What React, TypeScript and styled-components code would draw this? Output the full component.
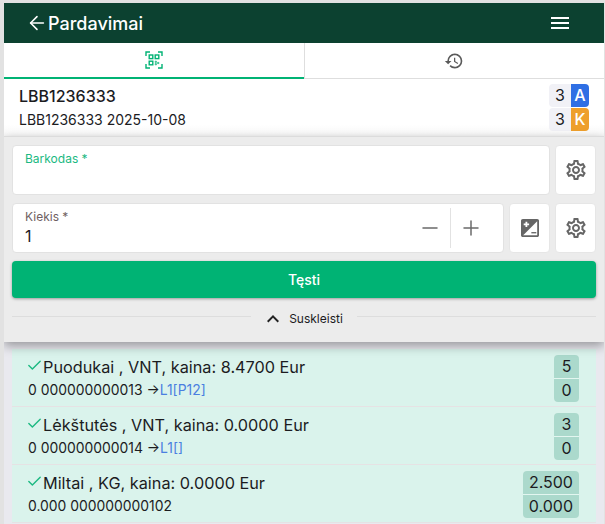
import React from 'react';
import styled, { createGlobalStyle } from 'styled-components';
import { ArrowLeft, Check, Minus, Plus } from 'lucide-react';
import { MdExpandLess, MdHistory, MdOutlineSettings } from 'react-icons/md';

const GlobalStyle = createGlobalStyle`
  html, body {
    margin: 0;
    padding: 0;
    height: 524px;
    overflow: hidden;
    background: #e2e2e2;
    font-family: Inter, "Liberation Sans", sans-serif;
    color: #1c1c1f;
  }
  * {
    box-sizing: border-box;
  }
`;

const Page = styled.div`
  width: 600px;
  height: 521px;
  margin: 3px 0 0 4px;
  background: #e9e9ef;
  overflow: hidden;
`;

const Header = styled.header`
  height: 40px;
  display: flex;
  align-items: center;
  justify-content: space-between;
  padding: 0 35px 0 22px;
  background: #0c4130;
  color: #fff;
`;

const HeaderTitle = styled.div`
  display: flex;
  align-items: center;
  gap: 0;
  font-size: 18px;
  font-weight: 500;
`;

const Tabs = styled.nav`
  height: 36px;
  display: flex;
  background: #fff;
`;

const Tab = styled.div<{ $active?: boolean }>`
  flex: 1;
  display: flex;
  align-items: center;
  justify-content: center;
  color: ${({ $active }) => ($active ? '#00b374' : '#5a5a5a')};
  border-bottom: ${({ $active }) => ($active ? '2px solid #00b374' : '1px solid #dedede')};
  border-left: ${({ $active }) => ($active ? 'none' : '1px solid #dedede')};
`;

const Summary = styled.section`
  height: 57px;
  display: flex;
  justify-content: space-between;
  padding: 5px 15px;
  background: linear-gradient(#fff 80%, #f8f8f8);
`;

const SummaryText = styled.div`
  display: flex;
  flex-direction: column;
  padding-top: 2px;
`;

const SummaryTitle = styled.div`
  font-size: 16px;
  font-weight: 500;
  line-height: 20px;
`;

const SummarySub = styled.div`
  font-size: 14px;
  line-height: 20px;
  margin-top: 4px;
`;

const Badges = styled.div`
  display: flex;
  flex-direction: column;
  gap: 1px;
`;

const BadgeRow = styled.div`
  display: flex;
  height: 23px;
  width: 40px;
  font-size: 16px;
  line-height: 23px;
  text-align: center;
`;

const BadgeCount = styled.span`
  flex: 1;
  background: #f1f1f6;
  border-radius: 4px 0 0 4px;
`;

const BadgeLetter = styled.span<{ $color: string }>`
  width: 18px;
  color: #fff;
  font-weight: 500;
  background: ${({ $color }) => $color};
  border-radius: 0 4px 4px 0;
`;

const Panel = styled.section`
  position: relative;
  z-index: 1;
  height: 206px;
  display: flex;
  flex-direction: column;
  padding: 8px 8px 0;
  background: #ececec;
  border-top: 1px solid #dcdcdc;
  box-shadow: 0 4px 10px rgba(0, 0, 0, 0.35);
`;

const FieldRow = styled.div`
  display: flex;
  gap: 5px;
  height: 50px;
  margin-bottom: 8px;
`;

const Field = styled.div`
  flex: 1;
  display: flex;
  align-items: stretch;
  background: #fff;
  border: 1px solid #e2e2e2;
  border-radius: 4px;
`;

const FieldBody = styled.div`
  flex: 1;
  padding: 6px 12px;
`;

const FieldLabel = styled.div<{ $focused?: boolean }>`
  font-size: 12px;
  line-height: 14px;
  color: ${({ $focused }) => ($focused ? '#1cb982' : '#6f5f62')};
`;

const FieldValue = styled.div`
  font-size: 16px;
  line-height: 20px;
  margin-top: 2px;
`;

const Stepper = styled.div`
  display: flex;
  align-items: center;
  padding-right: 12px;
  color: #6a6a6a;
`;

const StepButton = styled.div`
  width: 40px;
  height: 40px;
  display: flex;
  align-items: center;
  justify-content: center;
`;

const StepDivider = styled.div`
  width: 1px;
  height: 40px;
  background: #e2e2e2;
`;

const IconButton = styled.div`
  width: 41px;
  display: flex;
  align-items: center;
  justify-content: center;
  color: #666;
  background: #fff;
  border: 1px solid #e6e6e6;
  border-radius: 4px;
`;

const SubmitButton = styled.button`
  height: 37px;
  margin: 0;
  border: none;
  border-radius: 4px;
  background: #00b374;
  color: #fff;
  font-family: inherit;
  font-size: 14px;
  font-weight: 500;
  box-shadow: 0 1px 3px rgba(0, 0, 0, 0.35);
`;

const CollapseRow = styled.div`
  display: flex;
  align-items: flex-start;
  gap: 9px;
  margin-top: 9px;
`;

const CollapseLine = styled.div`
  flex: 1;
  height: 1px;
  margin-top: 9px;
  background: #dddddd;
`;

const CollapseLabel = styled.div`
  display: flex;
  align-items: center;
  gap: 4px;
  padding-left: 1px;
  padding-right: 5px;
  font-size: 12px;
  line-height: 14px;
`;

const ChevronIcon = styled(MdExpandLess)`
  color: #222;
`;

const List = styled.ul`
  margin: 7px 8px 0;
  padding: 0;
  list-style: none;
  background: #daf3ec;
`;

const Item = styled.li`
  height: 58px;
  display: flex;
  justify-content: space-between;
  padding: 6px 17px 0 14px;
  border-bottom: 1px solid #e6e2e4;
`;

const ItemText = styled.div`
  display: flex;
  flex-direction: column;
`;

const ItemTitle = styled.div`
  display: flex;
  align-items: center;
  font-size: 16.25px;
  line-height: 24px;
  color: #1c1c1f;
`;

const ItemCheck = styled(Check)`
  margin-top: -3px;
  color: #1cb982;
`;

const ItemSub = styled.div`
  font-size: 13.9px;
  line-height: 18px;
  margin-top: 2px;
  padding-left: 2px;
`;

const Location = styled.span`
  color: #4a7fe0;
`;

const Quantities = styled.div`
  display: flex;
  flex-direction: column;
  gap: 1px;
  border-radius: 4px;
  overflow: hidden;
  background: #e3f6f0;
  height: 47px;
  min-width: 25px;
`;

const Quantity = styled.div`
  flex: 1;
  padding: 0 6px;
  text-align: center;
  font-size: 16px;
  line-height: 23px;
  background: #abd9cc;
`;

function HamburgerIcon() {
  return (
    <svg width="18" height="12" viewBox="0 0 18 12" fill="#fff">
      <rect width="18" height="2" />
      <rect y="5" width="18" height="2" />
      <rect y="10" width="18" height="2" />
    </svg>
  );
}

function QrScanIcon() {
  return (
    <svg width="18" height="18" viewBox="0 0 18 18" fill="none" stroke="currentColor" strokeWidth="1.4">
      <path d="M1 5V1h4M13 1h4v4M17 13v4h-4M5 17H1v-4" />
      <rect x="4.2" y="4" width="3.6" height="3.6" />
      <rect x="10.2" y="4" width="3.6" height="3.6" />
      <rect x="4.2" y="10.2" width="3.6" height="3.6" />
      <path d="M10.2 10.2h1.2v1.2h-1.2zM12.6 11.400h1.200v1.200h-1.200zM10.2 12.600h1.200v1.200h-1.200z" strokeWidth="0.8" />
    </svg>
  );
}

function ExposureIcon() {
  return (
    <svg width="18" height="18" viewBox="2 2 20 20">
      <path fill="#666" d="M20 2H4C2.900 2 2 2.900 2 4v16c0 1.100.9 2 2 2h16c1.100 0 2-.9 2-2V4c0-1.100-.9-2-2-2z" />
      <path fill="#fff" d="M20 4.400V20H4.400z" />
      <path fill="#fff" d="M7 5h2v2h2v2H9v2H7V9H5V7h2z" />
      <path fill="#666" d="M13.500 16.500H19v1.500h-5.500z" />
    </svg>
  );
}

const items = [
  { name: 'Puodukai , VNT, kaina: 8.4700 Eur', sub: '0 000000000013', loc: 'L1[P12]', top: '5', bottom: '0' },
  { name: 'Lėkštutės , VNT, kaina: 0.0000 Eur', sub: '0 000000000014', loc: 'L1[]', top: '3', bottom: '0' },
  { name: 'Miltai , KG, kaina: 0.0000 Eur', sub: '0.000 000000000102', top: '2.500', bottom: '0.000' },
];

export default function App() {
  return (
    <>
      <GlobalStyle />
      <Page>
        <Header>
          <HeaderTitle>
            <ArrowLeft size={22} strokeWidth={1.7} />
            Pardavimai
          </HeaderTitle>
          <HamburgerIcon />
        </Header>
        <Tabs>
          <Tab $active>
            <QrScanIcon />
          </Tab>
          <Tab>
            <MdHistory size={20} />
          </Tab>
        </Tabs>
        <Summary>
          <SummaryText>
            <SummaryTitle>LBB1236333</SummaryTitle>
            <SummarySub>LBB1236333 2025-10-08</SummarySub>
          </SummaryText>
          <Badges>
            <BadgeRow>
              <BadgeCount>3</BadgeCount>
              <BadgeLetter $color="#2f6fe4">A</BadgeLetter>
            </BadgeRow>
            <BadgeRow>
              <BadgeCount>3</BadgeCount>
              <BadgeLetter $color="#ee9f2c">K</BadgeLetter>
            </BadgeRow>
          </Badges>
        </Summary>
        <Panel>
          <FieldRow>
            <Field>
              <FieldBody>
                <FieldLabel $focused>Barkodas *</FieldLabel>
              </FieldBody>
            </Field>
            <IconButton>
              <MdOutlineSettings size={24} />
            </IconButton>
          </FieldRow>
          <FieldRow>
            <Field>
              <FieldBody>
                <FieldLabel>Kiekis *</FieldLabel>
                <FieldValue>1</FieldValue>
              </FieldBody>
              <Stepper>
                <StepButton>
                  <Minus size={24} strokeWidth={1.5} />
                </StepButton>
                <StepDivider />
                <StepButton>
                  <Plus size={24} strokeWidth={1.5} />
                </StepButton>
              </Stepper>
            </Field>
            <IconButton>
              <ExposureIcon />
            </IconButton>
            <IconButton>
              <MdOutlineSettings size={24} />
            </IconButton>
          </FieldRow>
          <SubmitButton>Tęsti</SubmitButton>
          <CollapseRow>
            <CollapseLine />
            <CollapseLabel>
              <ChevronIcon size={24} />
              Suskleisti
            </CollapseLabel>
            <CollapseLine />
          </CollapseRow>
        </Panel>
        <List>
          {items.map((item) => (
            <Item key={item.sub}>
              <ItemText>
                <ItemTitle>
                  <ItemCheck size={17} strokeWidth={2} />
                  {item.name}
                </ItemTitle>
                <ItemSub>
                  {item.sub}
                  {item.loc && (
                    <>
                      {' →'}
                      <Location>{item.loc}</Location>
                    </>
                  )}
                </ItemSub>
              </ItemText>
              <Quantities>
                <Quantity>{item.top}</Quantity>
                <Quantity>{item.bottom}</Quantity>
              </Quantities>
            </Item>
          ))}
        </List>
      </Page>
    </>
  );
}
